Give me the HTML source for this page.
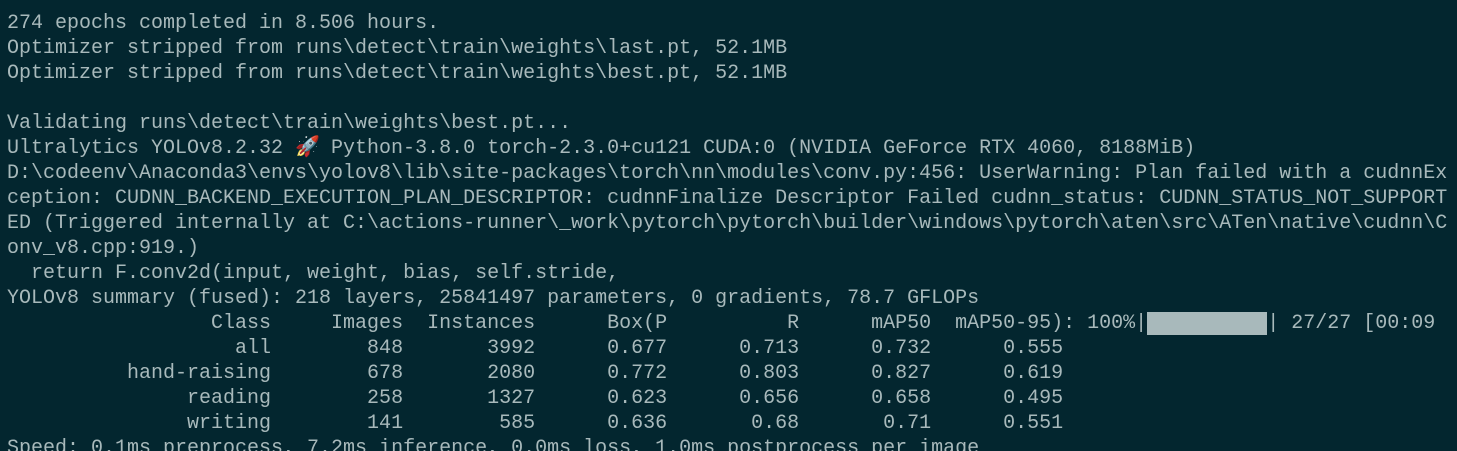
<!DOCTYPE html>
<html><head><meta charset="utf-8"><style>
html,body{margin:0;padding:0;background:#03262f;width:1457px;height:451px;overflow:hidden}
pre{margin:0;padding:11px 0 0 7px;font-family:"Liberation Mono","DejaVu Sans Mono",monospace;font-size:20px;line-height:25px;color:#a8b9bb;white-space:pre}
.bar{background:#a8b9bb}
.r{display:inline-block;width:2ch;text-align:center;color:#e05555}
</style></head><body><pre>274 epochs completed in 8.506 hours.
Optimizer stripped from runs\detect\train\weights\last.pt, 52.1MB
Optimizer stripped from runs\detect\train\weights\best.pt, 52.1MB

Validating runs\detect\train\weights\best.pt...
Ultralytics YOLOv8.2.32 <span class="r">🚀</span> Python-3.8.0 torch-2.3.0+cu121 CUDA:0 (NVIDIA GeForce RTX 4060, 8188MiB)
D:\codeenv\Anaconda3\envs\yolov8\lib\site-packages\torch\nn\modules\conv.py:456: UserWarning: Plan failed with a cudnnEx
ception: CUDNN_BACKEND_EXECUTION_PLAN_DESCRIPTOR: cudnnFinalize Descriptor Failed cudnn_status: CUDNN_STATUS_NOT_SUPPORT
ED (Triggered internally at C:\actions-runner\_work\pytorch\pytorch\builder\windows\pytorch\aten\src\ATen\native\cudnn\C
onv_v8.cpp:919.)
  return F.conv2d(input, weight, bias, self.stride,
YOLOv8 summary (fused): 218 layers, 25841497 parameters, 0 gradients, 78.7 GFLOPs
                 Class     Images  Instances      Box(P          R      mAP50  mAP50-95): 100%|<span class="bar">          </span>| 27/27 [00:09
                   all        848       3992      0.677      0.713      0.732      0.555
          hand-raising        678       2080      0.772      0.803      0.827      0.619
               reading        258       1327      0.623      0.656      0.658      0.495
               writing        141        585      0.636       0.68       0.71      0.551
Speed: 0.1ms preprocess, 7.2ms inference, 0.0ms loss, 1.0ms postprocess per image</pre></body></html>
